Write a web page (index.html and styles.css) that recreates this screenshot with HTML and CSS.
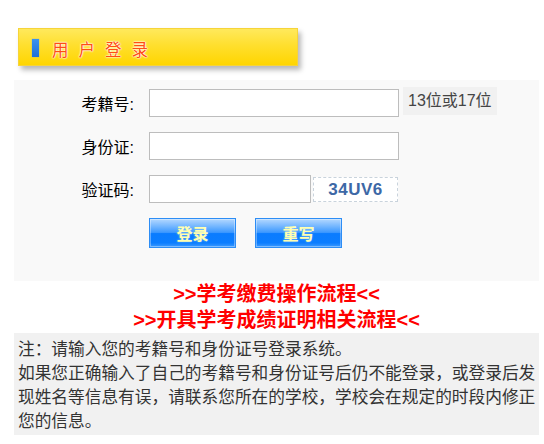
FILE: index.html
```html
<!DOCTYPE html>
<html lang="zh-CN">
<head>
<meta charset="utf-8">
<title>用户登录</title>
<link rel="stylesheet" href="styles.css">
</head>
<body>
<div class="page">
  <div class="banner">
    <span class="banner-bar"></span>
    <span class="banner-title">用户登录</span>
  </div>

  <div class="login-box">
    <div class="form">
      <label class="label">考籍号:</label>
      <div class="field">
        <input class="input" type="text">
        <span class="hint">13位或17位</span>
      </div>

      <label class="label">身份证:</label>
      <div class="field">
        <input class="input" type="text">
      </div>

      <label class="label">验证码:</label>
      <div class="field">
        <input class="input input-short" type="text">
        <span class="captcha">34UV6</span>
      </div>

      <span></span>
      <div class="buttons">
        <button class="btn" type="button">登录</button>
        <button class="btn" type="button">重写</button>
      </div>
    </div>
  </div>

  <div class="links">
    <a class="link" href="#">&gt;&gt;学考缴费操作流程&lt;&lt;</a>
    <a class="link" href="#">&gt;&gt;开具学考成绩证明相关流程&lt;&lt;</a>
  </div>

  <div class="note">
    注：请输入您的考籍号和身份证号登录系统。<br>
    如果您正确输入了自己的考籍号和身份证号后仍不能登录，或登录后发现姓名等信息有误，请联系您所在的学校，学校会在规定的时段内修正您的信息。
  </div>
</div>
</body>
</html>
```

FILE: styles.css
```css
html, body {
  margin: 0;
  padding: 0;
  background: #fff;
}

body {
  font-family: "Liberation Sans", "Noto Sans CJK SC", sans-serif;
  color: #000;
}

.page {
  width: 525px;
  padding: 28px 0 0 14px;
}

/* banner */
.banner {
  margin-left: 4px;
  width: 278px;
  height: 36px;
  border: 1px solid #f6d43a;
  background: linear-gradient(to bottom, #ffe95c 0%, #ffdf2e 45%, #ffd500 100%);
  box-shadow: 3px 4px 5px rgba(0, 0, 0, 0.28);
  display: flex;
  align-items: center;
}

.banner-bar {
  width: 7px;
  height: 18px;
  margin-left: 13px;
  margin-top: 1px;
  background: linear-gradient(to bottom, #3b93f0, #1f6fd8);
  box-shadow: 0 0 1px #7aa8d8;
}

.banner-title {
  margin-left: 13px;
  font-size: 16.5px;
  letter-spacing: 10px;
  color: #ff4e12;
  text-shadow: 0 0 2px #fff, 0 0 2px #fff, 0 0 1px #fff;
  margin-top: 3px;
}

/* login box */
.login-box {
  margin-top: 14px;
  height: 201px;
  background: #f9f9f9;
  box-sizing: border-box;
  padding-top: 9px;
}

.form {
  display: grid;
  grid-template-columns: 120px auto;
  column-gap: 15px;
  row-gap: 15px;
  align-items: center;
}

.label {
  text-align: right;
  font-size: 16px;
  color: #000;
}

.field {
  display: flex;
  align-items: center;
  height: 28px;
}

.input {
  box-sizing: border-box;
  width: 250px;
  height: 28px;
  margin: 0;
  border: 1px solid #bdbdbd;
  background: #fff;
  padding: 2px 4px;
  font-size: 14px;
}

.input-short {
  width: 162px;
}

.hint {
  margin-left: 4px;
  align-self: flex-start;
  margin-top: -2px;
  height: 28px;
  line-height: 28px;
  padding: 0 5px;
  background: #f1f1f1;
  font-size: 16px;
  color: #444;
}

.captcha {
  margin-left: 2px;
  box-sizing: border-box;
  width: 85px;
  height: 25px;
  border: 1px dashed #c9d3dc;
  background: #fff;
  text-align: center;
  line-height: 23px;
  font-family: "Liberation Sans", Arial, sans-serif;
  font-weight: bold;
  font-size: 17px;
  color: #3d68a6;
  letter-spacing: 0.5px;
}

.buttons {
  display: flex;
  gap: 19px;
}

.btn {
  box-sizing: border-box;
  width: 87px;
  height: 30px;
  margin: 0;
  padding: 0;
  border: 1px solid #2d8df5;
  background: linear-gradient(to bottom, #b4d8ff 0%, #6ab1ff 30%, #3c98ff 48%, #0a7cff 52%, #0b7dff 85%, #3d9bff 100%);
  box-shadow: inset 0 0 0 1px rgba(255, 255, 255, 0.35);
  font-family: "Liberation Sans", "Noto Sans CJK SC", sans-serif;
  font-size: 16px;
  font-weight: bold;
  color: #ffffb0;
  text-shadow: 0 0 2px #7fbfff;
  cursor: pointer;
}

/* links */
.links {
  display: flex;
  flex-direction: column;
  align-items: center;
  padding: 0;
}

.link {
  font-size: 20px;
  font-weight: bold;
  line-height: 26px;
  color: #ff0000;
  text-decoration: none;
}

/* note */
.note {
  background: #f1f1f1;
  padding: 5px 0 1px 4px;
  font-size: 16.7px;
  line-height: 24px;
  color: #333;
}
```
